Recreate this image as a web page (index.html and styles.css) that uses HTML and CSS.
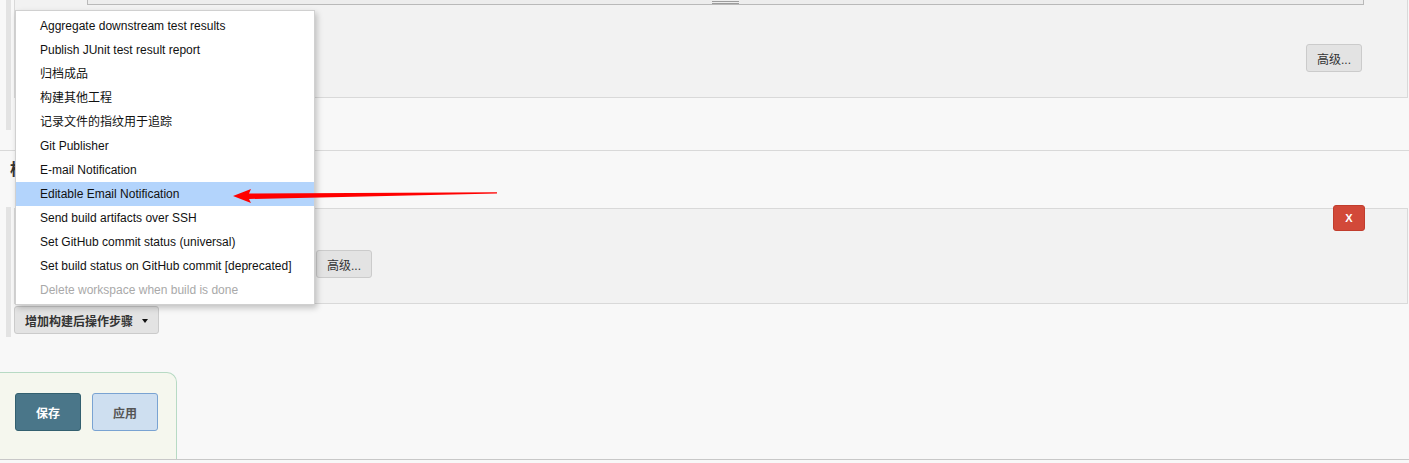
FILE: index.html
```html
<!DOCTYPE html>
<html lang="zh-CN">
<head>
<meta charset="utf-8">
<title>配置</title>
<link rel="stylesheet" href="styles.css">
</head>
<body>
<div class="page">
  <div class="repeated repeated-build">
    <div class="chunk chunk-top">
      <div class="textarea-stub"><span class="grip"></span></div>
      <div class="chunk-row">
        <button class="btn btn-adv">高级...</button>
      </div>
    </div>
    <div class="add-slot"></div>
  </div>

  <div class="section">
    <div class="section-title">构建后操作</div>
    <div class="repeated repeated-post">
      <div class="chunk chunk-post">
        <button class="btn-delete">X</button>
        <button class="btn btn-adv btn-adv-post">高级...</button>
      </div>
      <button class="btn btn-add btn-add-post">增加构建后操作步骤 <span class="caret"></span></button>
    </div>
  </div>

  <div class="bottom-bar">
    <div class="bottom-sticker">
      <button class="btn-save">保存</button>
      <button class="btn-apply">应用</button>
    </div>
  </div>

  <ul class="menu">
    <li class="menu-item">Aggregate downstream test results</li>
    <li class="menu-item">Publish JUnit test result report</li>
    <li class="menu-item">归档成品</li>
    <li class="menu-item">构建其他工程</li>
    <li class="menu-item">记录文件的指纹用于追踪</li>
    <li class="menu-item">Git Publisher</li>
    <li class="menu-item">E-mail Notification</li>
    <li class="menu-item is-active">Editable Email Notification</li>
    <li class="menu-item">Send build artifacts over SSH</li>
    <li class="menu-item">Set GitHub commit status (universal)</li>
    <li class="menu-item">Set build status on GitHub commit [deprecated]</li>
    <li class="menu-item is-disabled">Delete workspace when build is done</li>
  </ul>

  <svg class="arrow" width="1409" height="463" viewBox="0 0 1409 463" aria-hidden="true">
    <polygon points="233,196 251,189 249,193.5 497,192.2 497,193.4 249,199 251,203" fill="#ff0000"/>
  </svg>
</div>
</body>
</html>
```

FILE: styles.css
```css
html, body {
  margin: 0;
  padding: 0;
}

body {
  font-family: "Liberation Sans", "Noto Sans CJK SC", sans-serif;
  font-size: 12px;
  color: #333;
  background: #f8f8f8;
}

.page {
  position: relative;
  width: 1409px;
  height: 463px;
  overflow: hidden;
  background: #f8f8f8;
}

button {
  font-family: "Liberation Sans", "Noto Sans CJK SC", sans-serif;
  margin: 0;
  cursor: pointer;
}

/* repeated containers with left stripe */
.repeated {
  margin-left: 6px;
  border-left: 5px solid #e3e3e3;
  padding-left: 3px;
  margin-right: 1px;
}

.repeated-build {
  padding-bottom: 1px;
}

.add-slot {
  height: 31px;
}

.repeated-post {
  padding-top: 1px;
  padding-bottom: 3px;
}

.chunk {
  background: #f2f2f2;
  border: 1px solid #d9d9d9;
}

.chunk-top {
  border-top: none;
}

.textarea-stub {
  display: flex;
  justify-content: center;
  margin-left: 72px;
  width: 1275px;
  height: 4px;
  background: #ededed;
  border: 1px solid #b9b9b9;
  border-top: none;
}

.grip {
  display: block;
  width: 27px;
  height: 1px;
  margin-top: 1px;
  border-top: 1px solid #9c9c9c;
  border-bottom: 1px solid #9c9c9c;
}

.chunk-row {
  display: flex;
  justify-content: flex-end;
  margin: 39px 45px 25px 0;
}

.btn {
  height: 28px;
  padding: 0 9px;
  font-size: 12px;
  color: #333;
  background: #e3e3e3;
  border: 1px solid #cbcbcb;
  border-radius: 3px;
  box-sizing: border-box;
}

.btn-adv {
  width: 56px;
  padding: 0;
}

.btn-add {
  display: flex;
  align-items: center;
  padding: 0 9px 0 10px;
  font-weight: bold;
  color: #333;
}

.btn-add-post {
  margin-top: 2px;
  width: 145px;
}

.caret {
  display: inline-block;
  width: 0;
  height: 0;
  margin-left: 9px;
  margin-top: 2px;
  border-top: 4px solid #111;
  border-left: 3px solid transparent;
  border-right: 3px solid transparent;
}

/* section */
.section {
  margin-top: 20px;
  border-top: 1px solid #d9d9d9;
}

.section-title {
  padding: 8px 0 0 10px;
  margin-bottom: 26px;
  font-size: 16px;
  line-height: 22px;
  font-weight: bold;
  color: #333;
}

.chunk-post {
  position: relative;
  padding: 41px 0 25px 301px;
}

.btn-adv-post {
  display: block;
}

.btn-delete {
  position: absolute;
  top: -4px;
  right: 42px;
  width: 32px;
  height: 26px;
  padding: 0;
  background: #d24939;
  border: 1px solid #c13d2d;
  border-radius: 3px;
  color: #fff;
  font-size: 11px;
  font-weight: bold;
  box-sizing: border-box;
}

/* bottom bar */
.bottom-bar {
  margin-top: 35px;
  border-bottom: 1px solid #c8c8c8;
}

.bottom-sticker {
  display: flex;
  align-items: flex-start;
  gap: 11px;
  width: 161px;
  height: 66px;
  padding: 20px 0 0 15px;
  background: #f5f7ee;
  border-top: 1px solid #b7dac4;
  border-right: 1px solid #b7dac4;
  border-top-right-radius: 10px;
}

.btn-save,
.btn-apply {
  width: 66px;
  height: 38px;
  padding: 0;
  border-radius: 3px;
  font-size: 12px;
  font-weight: bold;
  box-sizing: border-box;
}

.btn-save {
  background: #4a7689;
  border: 1px solid #33606f;
  color: #fff;
}

.btn-apply {
  background: #cedff0;
  border: 1px solid #79a3d2;
  color: #555;
}

/* dropdown menu */
.menu {
  position: absolute;
  left: 15px;
  top: 10px;
  width: 298px;
  margin: 0;
  padding: 3px 0 2px;
  list-style: none;
  background: #fff;
  border: 1px solid #d0d0d0;
  box-shadow: 2px 3px 6px rgba(0, 0, 0, 0.22);
}

.menu-item {
  height: 24px;
  line-height: 24px;
  padding-left: 24px;
  font-size: 12px;
  color: #111;
  white-space: nowrap;
}

.menu-item.is-active {
  background: #b3d4fc;
}

.menu-item.is-disabled {
  color: #a9a9a9;
}

.arrow {
  position: absolute;
  left: 0;
  top: 0;
  pointer-events: none;
}
```
